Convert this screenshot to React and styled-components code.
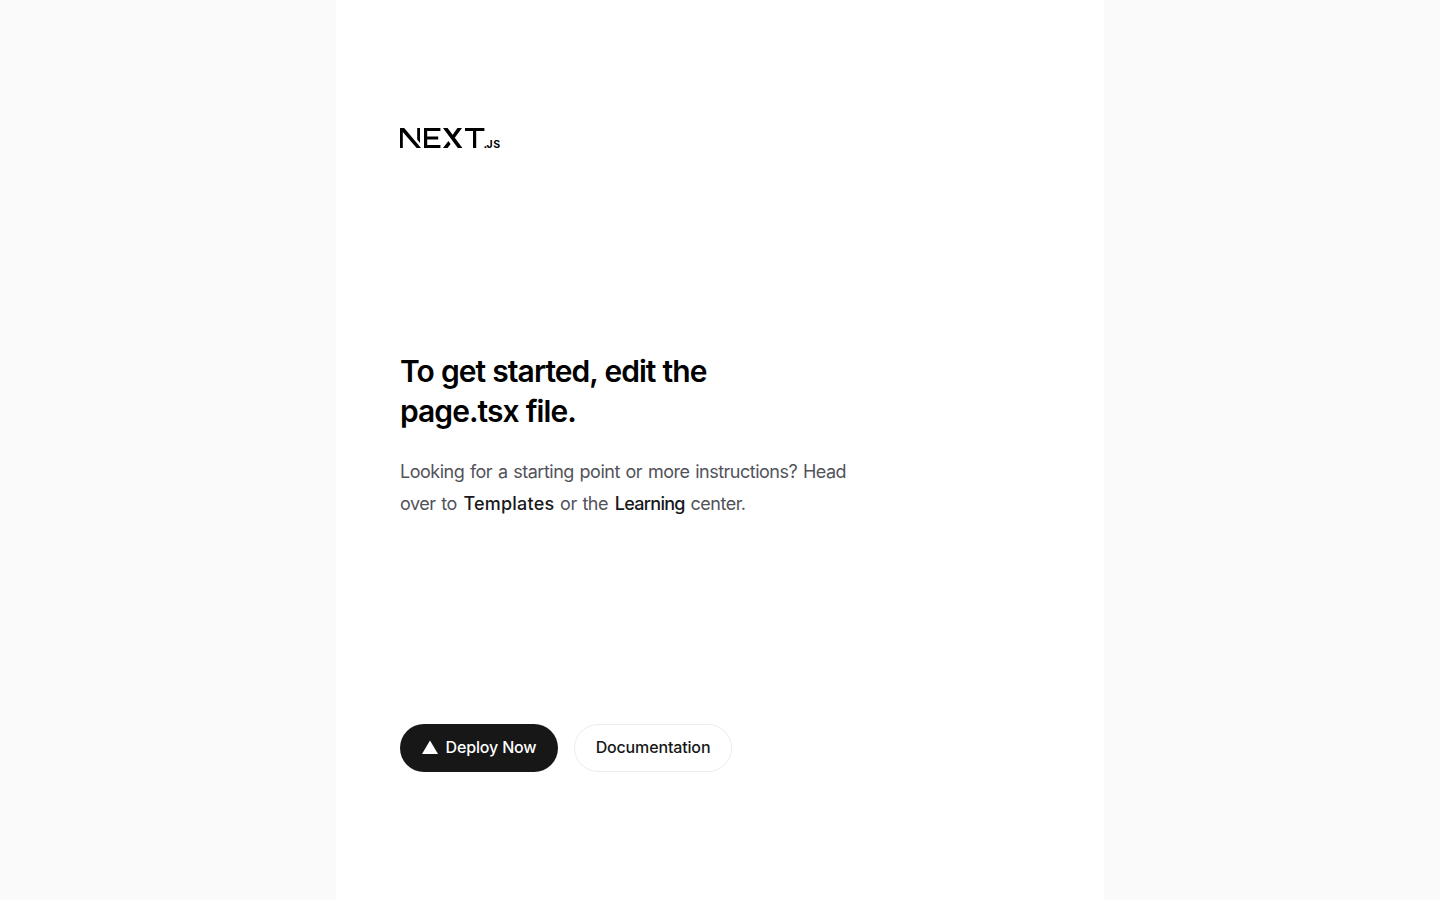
import styled, { createGlobalStyle } from 'styled-components';

const GlobalStyles = createGlobalStyle`
  * {
    box-sizing: border-box;
  }
  html, body {
    margin: 0;
    background-color: #fafafa;
    font-family: 'Inter', 'Liberation Sans', sans-serif;
  }
`;

const Page = styled.div`
  display: flex;
  justify-content: center;
  min-height: 900px;
  background-color: #fafafa;
`;

const Main = styled.main`
  width: 768px;
  height: 900px;
  padding: 128px 64px;
  display: flex;
  flex-direction: column;
  justify-content: space-between;
  align-items: flex-start;
  background-color: #fff;
`;

const Logo = styled.svg`
  display: block;
  width: 100px;
  height: 20px;
  overflow: visible;
`;

const LogoSuffix = styled.text`
  font-size: 10.5px;
  font-weight: 700;
  letter-spacing: 0.6px;
  fill: #000;
`;

const Intro = styled.div`
  display: flex;
  flex-direction: column;
  gap: 24px;
`;

const Title = styled.h1`
  margin: -1px 0 1px;
  max-width: 320px;
  font-size: 30px;
  font-weight: 600;
  line-height: 40px;
  letter-spacing: -0.95px;
  word-spacing: 0.5px;
  color: #000;
`;

const Description = styled.p`
  margin: 0;
  max-width: 452px;
  font-size: 18px;
  line-height: 32px;
  letter-spacing: -0.5px;
  word-spacing: 1.2px;
  color: #52525b;
`;

const TextLink = styled.a`
  margin-left: 1px;
  font-weight: 500;
  letter-spacing: ${({ $spacing }) => $spacing};
  color: #18181b;
  text-decoration: none;
`;

const Actions = styled.div`
  display: flex;
  gap: 16px;
`;

const Button = styled.a`
  width: 158px;
  height: 48px;
  display: flex;
  align-items: center;
  justify-content: center;
  gap: 8px;
  border-radius: 24px;
  border: 1px solid ${({ $primary }) => ($primary ? 'transparent' : 'rgba(0, 0, 0, 0.08)')};
  background-color: ${({ $primary }) => ($primary ? '#171717' : 'transparent')};
  color: ${({ $primary }) => ($primary ? '#fff' : '#171717')};
  font-size: 16px;
  font-weight: 500;
  line-height: 22px;
  padding-bottom: 2px;
  letter-spacing: -0.15px;
  text-decoration: none;
`;

const App = () => {
  return (
    <>
      <GlobalStyles />
      <Page>
        <Main>
          <Logo viewBox="0 0 100 20" aria-label="Next.js logo">
            <path
              d="M0 0H4.2L21 20H16.6L2.8 4V20H0ZM17.2 0H20V15L17.2 11.6ZM24 0H40.4V3.1H27.2V8.4H38.2V11.5H27.2V16.9H40.4V20H24ZM43 0H47.6L62.4 20H57.8ZM57.4 0H62L54.8 9.8L52.6 6.9ZM43 20H47.6L50.6 15.9L48.4 12.9ZM65 0H84.4V3.1H76.2V20H73V3.1H65ZM84.6 18.2H86.4V20H84.6Z"
              fill="#000"
            />
            <LogoSuffix x="86.6" y="20">JS</LogoSuffix>
          </Logo>
          <Intro>
            <Title>To get started, edit the page.tsx file.</Title>
            <Description>
              Looking for a starting point or more instructions? Head over to{' '}
              <TextLink href="#" $spacing="0.2px">Templates</TextLink> or the{' '}
              <TextLink href="#" $spacing="-0.7px">Learning</TextLink> center.
            </Description>
          </Intro>
          <Actions>
            <Button href="#" $primary>
              <svg width="16" height="16" viewBox="0 0 16 16">
                <path d="M8 1.5L16 15H0L8 1.5Z" fill="#fff" />
              </svg>
              Deploy Now
            </Button>
            <Button href="#">Documentation</Button>
          </Actions>
        </Main>
      </Page>
    </>
  );
};

export default App;
